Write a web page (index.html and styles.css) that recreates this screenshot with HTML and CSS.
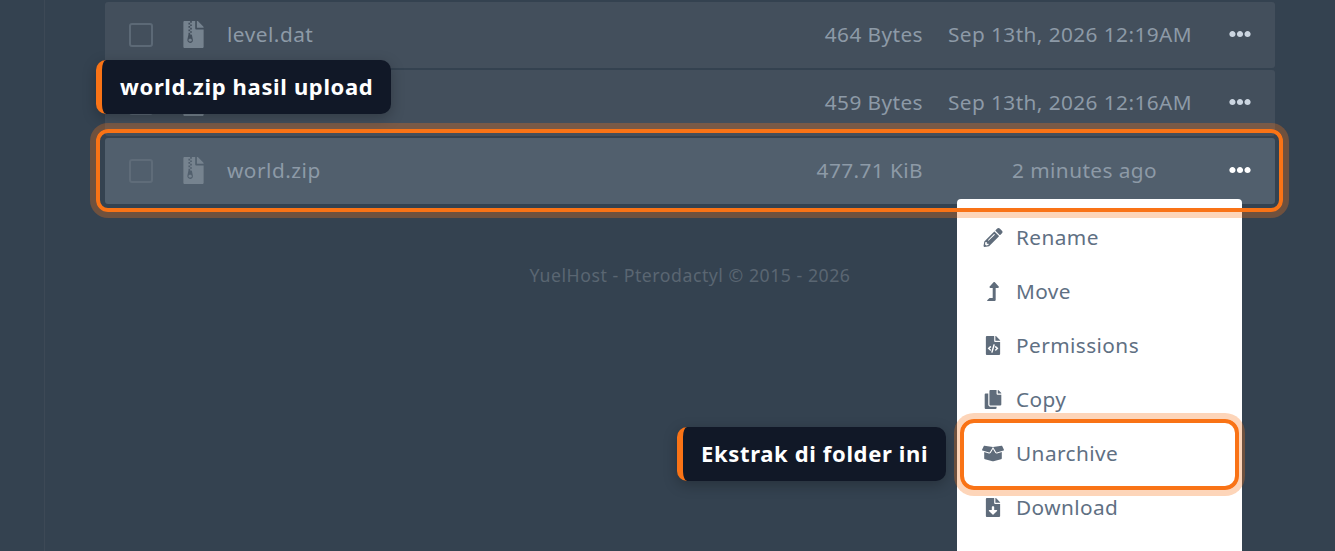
FILE: index.html

```html
<!DOCTYPE html>
<html lang="en">
<head>
  <meta charset="UTF-8">
  <title>File Manager</title>
  <link rel="stylesheet" href="styles.css">
</head>
<body>
  <svg class="sprites" xmlns="http://www.w3.org/2000/svg">
    <symbol id="i-zip" viewBox="0 0 384 512"><path d="M377 105L279.1 7c-4.5-4.5-10.6-7-17-7H256v128h128v-6.1c0-6.3-2.5-12.4-7-16.9zM128.4 336c-17.9 0-32.4 12.1-32.4 27 0 15 14.6 27 32.5 27s32.4-12.1 32.4-27-14.6-27-32.5-27zM224 136V0h-63.6v32h-32V0H24C10.7 0 0 10.7 0 24v464c0 13.3 10.7 24 24 24h336c13.3 0 24-10.7 24-24V160H248c-13.2 0-24-10.8-24-24zM95.9 32h32v32h-32zm32.3 384c-33.2 0-58-30.4-51.4-62.9L96.4 256v-32h32v-32h-32v-32h32v-32h-32V96h32V64h32v32h-32v32h32v32h-32v32h32v32h-32v32h22.1c5.7 0 10.7 4.1 11.8 9.7l17.3 87.7c6.4 32.4-18.4 62.6-51.4 62.6z"/></symbol>
    <symbol id="i-dots" viewBox="0 0 512 512"><path d="M328 256c0 39.8-32.2 72-72 72s-72-32.2-72-72 32.2-72 72-72 72 32.2 72 72zm104-72c-39.8 0-72 32.2-72 72s32.2 72 72 72 72-32.2 72-72-32.2-72-72-72zm-352 0c-39.8 0-72 32.2-72 72s32.2 72 72 72 72-32.2 72-72-32.2-72-72-72z"/></symbol>
    <symbol id="i-pencil" viewBox="0 0 512 512"><path d="M497.9 142.1l-46.1 46.1c-4.7 4.7-12.3 4.7-17 0l-111-111c-4.7-4.7-4.7-12.3 0-17l46.1-46.1c18.7-18.7 49.1-18.7 67.9 0l60.1 60.1c18.8 18.7 18.8 49.1 0 67.9zM284.2 99.8L21.6 362.4.4 483.9c-2.9 16.4 11.4 30.6 27.8 27.8l121.5-21.3 262.6-262.6c4.7-4.7 4.7-12.3 0-17l-111-111c-4.8-4.7-12.4-4.7-17.1 0zM124.1 339.9c-5.5-5.5-5.5-14.3 0-19.8l154-154c5.5-5.5 14.3-5.5 19.8 0s5.5 14.3 0 19.8l-154 154c-5.5 5.5-14.3 5.5-19.8 0zM88 424h48v36.3l-64.5 11.3-31.1-31.1L51.7 376H88v48z"/></symbol>
    <symbol id="i-move" viewBox="0 0 320 512"><path d="M313.553 119.669L209.587 7.666c-9.485-10.214-25.676-10.229-35.174 0L70.438 119.669C56.232 134.969 67.062 160 88.025 160H152v272H68.024a11.996 11.996 0 0 0-8.485 3.515l-56 56C-4.021 499.074 1.333 512 12.024 512H208c13.255 0 24-10.745 24-24V160h63.966c20.878 0 31.851-24.969 17.587-40.331z"/></symbol>
    <symbol id="i-code" viewBox="0 0 384 512"><path d="M384 121.941V128H256V0h6.059c6.365 0 12.47 2.529 16.971 7.029l97.941 97.941A24.005 24.005 0 0 1 384 121.941zM248 160c-13.2 0-24-10.8-24-24V0H24C10.745 0 0 10.745 0 24v464c0 13.255 10.745 24 24 24h336c13.255 0 24-10.745 24-24V160H248zM123.206 400.505a5.4 5.4 0 0 1-7.633.246l-64.866-60.812a5.4 5.4 0 0 1 0-7.879l64.866-60.812a5.4 5.4 0 0 1 7.633.246l19.579 20.885a5.4 5.4 0 0 1-.372 7.747L101.65 336l40.763 35.874a5.4 5.4 0 0 1 .372 7.747l-19.579 20.884zm51.295 50.479l-27.453-7.97a5.402 5.402 0 0 1-3.681-6.692l61.44-211.626a5.402 5.402 0 0 1 6.692-3.681l27.452 7.97a5.4 5.4 0 0 1 3.68 6.692l-61.44 211.626a5.397 5.397 0 0 1-6.69 3.681zm160.792-111.045l-64.866 60.812a5.4 5.4 0 0 1-7.633-.246l-19.58-20.885a5.4 5.4 0 0 1 .372-7.747L284.35 336l-40.763-35.874a5.4 5.4 0 0 1-.372-7.747l19.58-20.885a5.4 5.4 0 0 1 7.633-.246l64.866 60.812a5.4 5.4 0 0 1-.001 7.879z"/></symbol>
    <symbol id="i-copy" viewBox="0 0 448 512"><path d="M320 448v40c0 13.255-10.745 24-24 24H24c-13.255 0-24-10.745-24-24V120c0-13.255 10.745-24 24-24h72v296c0 30.879 25.121 56 56 56h168zm0-344V0H152c-13.255 0-24 10.745-24 24v368c0 13.255 10.745 24 24 24h272c13.255 0 24-10.745 24-24V128H344c-13.2 0-24-10.8-24-24zm120.971-31.029L375.029 7.029A24 24 0 0 0 358.059 0H352v96h96v-6.059a24 24 0 0 0-7.029-16.97z"/></symbol>
    <symbol id="i-box" viewBox="0 0 640 512"><path d="M425.7 256c-16.9 0-32.8-9-41.4-23.4L320 126l-64.2 106.6c-8.7 14.5-24.6 23.5-41.5 23.5-4.5 0-9-.6-13.3-1.9L64 215v178c0 14.7 10 27.5 24.2 31l216.2 54.1c10.2 2.5 20.9 2.5 31 0L551.8 424c14.2-3.6 24.2-16.4 24.2-31V215l-137 39.1c-4.3 1.3-8.8 1.9-13.3 1.9zm212.6-112.2L586.8 41c-3.1-6.2-9.8-9.8-16.7-8.9L320 64l91.7 152.1c3.8 6.3 11.4 9.3 18.5 7.3l197.9-56.5c9.9-2.9 14.7-13.9 10.2-23.1zM53.2 41L1.7 143.8c-4.6 9.2.3 20.2 10.1 23l197.9 56.5c7.1 2 14.7-1 18.5-7.3L320 64 69.8 32.1c-6.9-.8-13.5 2.7-16.6 8.9z"/></symbol>
    <symbol id="i-download" viewBox="0 0 384 512"><path d="M224 136V0H24C10.7 0 0 10.7 0 24v464c0 13.3 10.7 24 24 24h336c13.3 0 24-10.7 24-24V160H248c-13.2 0-24-10.8-24-24zm76.45 211.36l-96.42 95.7c-6.65 6.61-17.39 6.61-24.04 0l-96.42-95.7C73.42 337.29 80.54 320 94.82 320H160v-80c0-8.84 7.16-16 16-16h32c8.84 0 16 7.16 16 16v80h65.18c14.28 0 21.4 17.29 11.27 27.36zM377 105L279.1 7c-4.5-4.5-10.6-7-17-7H256v128h128v-6.1c0-6.3-2.5-12.4-7-16.9z"/></symbol>
  </svg>

  <div class="layout">
    <div class="sidebar"></div>
    <main class="content">
      <div class="files">
        <div class="row">
          <span class="check"></span>
          <svg class="file-icon"><use href="#i-zip"/></svg>
          <span class="name">level.dat</span>
          <span class="size">464 Bytes</span>
          <span class="date">Sep 13th, 2026 12:19AM</span>
          <svg class="dots"><use href="#i-dots"/></svg>
        </div>
        <div class="row">
          <span class="check"></span>
          <svg class="file-icon"><use href="#i-zip"/></svg>
          <span class="name"></span>
          <span class="size">459 Bytes</span>
          <span class="date">Sep 13th, 2026 12:16AM</span>
          <svg class="dots"><use href="#i-dots"/></svg>
        </div>
        <div class="row row-active">
          <span class="check"></span>
          <svg class="file-icon"><use href="#i-zip"/></svg>
          <span class="name">world.zip</span>
          <span class="size">477.71 KiB</span>
          <span class="date date-relative">2 minutes ago</span>
          <svg class="dots dots-active"><use href="#i-dots"/></svg>
          <div class="ring ring-row"></div>
        </div>

        <p class="footer">YuelHost - Pterodactyl © 2015 - 2026</p>

        <div class="callout callout-upload">world.zip hasil upload</div>
        <div class="callout callout-extract">Ekstrak di folder ini</div>

        <ul class="menu">
          <li class="menu-item"><svg class="menu-icon"><use href="#i-pencil"/></svg>Rename</li>
          <li class="menu-item"><svg class="menu-icon"><use href="#i-move"/></svg>Move</li>
          <li class="menu-item"><svg class="menu-icon"><use href="#i-code"/></svg>Permissions</li>
          <li class="menu-item"><svg class="menu-icon"><use href="#i-copy"/></svg>Copy</li>
          <li class="menu-item"><svg class="menu-icon"><use href="#i-box"/></svg>Unarchive<div class="ring ring-item"></div></li>
          <li class="menu-item"><svg class="menu-icon"><use href="#i-download"/></svg>Download</li>
        </ul>
      </div>
    </main>
  </div>
</body>
</html>
```

FILE: styles.css

```css
* {
  box-sizing: border-box;
}
html, body {
  height: 100%;
}
body {
  margin: 0;
  overflow: hidden;
  background: #344250;
  color: #8d9aa7;
  font-family: "Noto Sans", sans-serif;
  font-size: 20.8px;
  letter-spacing: 0.42px;
}
.sprites {
  display: none;
}
.layout {
  display: flex;
  height: 100%;
}
.sidebar {
  flex: 0 0 45px;
  border-right: 1px solid #3d4956;
}
.content {
  flex: 0 0 1230px;
  padding-left: 60px;
}
.files {
  position: relative;
  height: 551px;
  padding-top: 2px;
}
.row {
  position: relative;
  display: flex;
  align-items: center;
  height: 66px;
  margin-bottom: 2px;
  padding-left: 24px;
  background: #434f5c;
  border-radius: 3px;
}
.row-active {
  background: #515f6d;
}
.check {
  flex: none;
  width: 24px;
  height: 24px;
  border: 2px solid #5c6976;
  border-radius: 3px;
}
.row-active .check {
  border-color: #5f6c79;
}
.file-icon {
  flex: none;
  width: 21px;
  height: 27px;
  margin-bottom: 1px;
  margin-left: 30px;
  fill: #76838f;
}
.name {
  flex: 1;
  margin-bottom: 2px;
  margin-left: 23px;
  letter-spacing: 0.5px;
}
.size {
  width: 120px;
  margin-bottom: 2px;
  text-align: right;
}
.date {
  width: 269px;
  margin-bottom: 2px;
  text-align: right;
}
.date-relative {
  padding-right: 35px;
}
.dots {
  flex: none;
  width: 22px;
  height: 22px;
  margin: 0 24px 2px 37px;
  fill: #cbd5e0;
}
.dots-active {
  fill: #fff;
}
.ring {
  position: absolute;
  border: 4px solid #f97316;
  box-shadow: 0 0 0 6px rgba(249, 115, 22, 0.3);
  pointer-events: none;
}
.ring-row {
  z-index: 3;
  top: -9px;
  right: -8px;
  bottom: -8px;
  left: -9px;
  border-radius: 12px;
}
.ring-item {
  top: -7px;
  right: 3px;
  bottom: -10px;
  left: 3px;
  border-radius: 14px;
}
.footer {
  margin: 0;
  padding-top: 57px;
  color: #5a6672;
  font-size: 17.7px;
  letter-spacing: 0.52px;
  text-align: center;
}
.callout {
  position: absolute;
  z-index: 4;
  height: 54px;
  padding-left: 18px;
  padding-right: 18px;
  background: #111827;
  border-left: 6px solid #f97316;
  border-radius: 10px;
  box-shadow: 0 4px 14px rgba(0, 0, 0, 0.25);
  color: #fff;
  font-size: 22px;
  font-weight: 700;
  letter-spacing: 0.65px;
  line-height: 52px;
  white-space: nowrap;
}
.callout-upload {
  top: 60px;
  left: -9px;
}
.callout-extract {
  top: 427px;
  left: 572px;
}
.menu {
  position: absolute;
  z-index: 2;
  top: 199px;
  left: 852px;
  width: 285px;
  height: 352px;
  margin: 0;
  padding: 11px 0 0;
  list-style: none;
  background: #fff;
  border-radius: 4px 4px 0 0;
  color: #5f7083;
}
.menu-item {
  position: relative;
  display: flex;
  align-items: center;
  height: 54px;
  padding-left: 25px;
}
.menu-icon {
  flex: none;
  width: 22px;
  height: 19px;
  margin-right: 12px;
  fill: #5f6c7b;
}
```
